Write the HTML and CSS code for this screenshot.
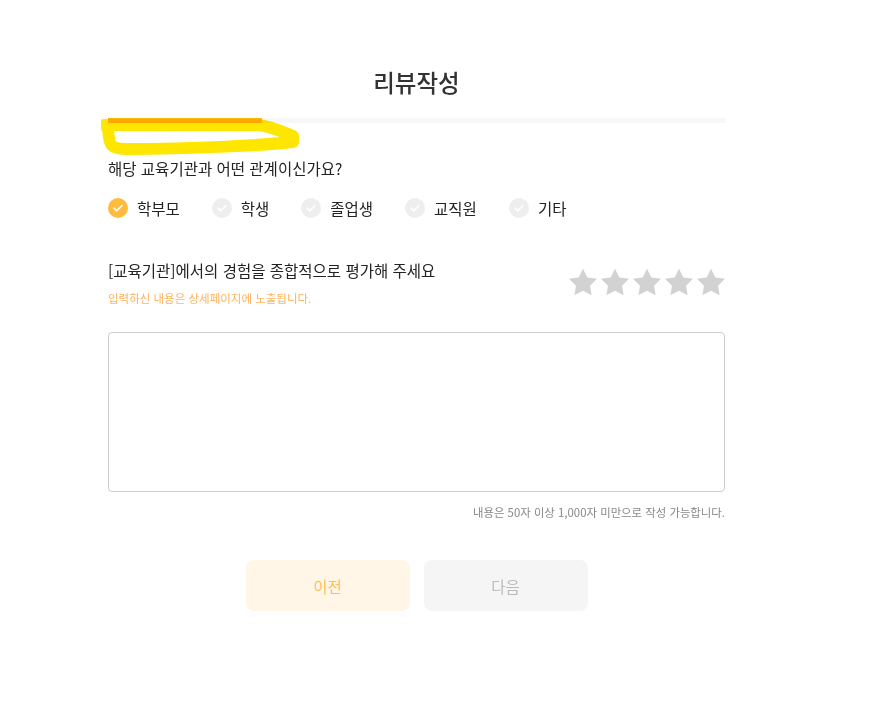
FILE: index.html
```html
<!DOCTYPE html>
<html lang="ko">
<head>
<meta charset="utf-8">
<title>리뷰작성</title>
<link rel="stylesheet" href="styles.css">
</head>
<body>
<div class="page">
  <h1 class="title">리뷰작성</h1>
  <div class="progress"><div class="progress-fill" style="width:25%"></div></div>
  <p class="question">해당 교육기관과 어떤 관계이신가요?</p>
  <div class="options">
    <label class="option active"><span class="check"><svg viewBox="0 0 20 20"><path d="M6 10.2l2.7 2.6L14 7.6"/></svg></span>학부모</label>
    <label class="option"><span class="check"><svg viewBox="0 0 20 20"><path d="M6 10.2l2.7 2.6L14 7.6"/></svg></span>학생</label>
    <label class="option"><span class="check"><svg viewBox="0 0 20 20"><path d="M6 10.2l2.7 2.6L14 7.6"/></svg></span>졸업생</label>
    <label class="option"><span class="check"><svg viewBox="0 0 20 20"><path d="M6 10.2l2.7 2.6L14 7.6"/></svg></span>교직원</label>
    <label class="option"><span class="check"><svg viewBox="0 0 20 20"><path d="M6 10.2l2.7 2.6L14 7.6"/></svg></span>기타</label>
  </div>
  <div class="rating-row">
    <div class="rating-text">
      <p class="rating-label">[교육기관]에서의 경험을 종합적으로 평가해 주세요</p>
      <p class="note">입력하신 내용은 상세페이지에 노출됩니다.</p>
    </div>
    <div class="stars">
      <svg viewBox="2 2 20 19.02"><polygon points="12,2 15.09,8.26 22,9.27 17,14.14 18.18,21.02 12,17.77 5.82,21.02 7,14.14 2,9.27 8.91,8.26"/></svg>
      <svg viewBox="2 2 20 19.02"><polygon points="12,2 15.09,8.26 22,9.27 17,14.14 18.18,21.02 12,17.77 5.82,21.02 7,14.14 2,9.27 8.91,8.26"/></svg>
      <svg viewBox="2 2 20 19.02"><polygon points="12,2 15.09,8.26 22,9.27 17,14.14 18.18,21.02 12,17.77 5.82,21.02 7,14.14 2,9.27 8.91,8.26"/></svg>
      <svg viewBox="2 2 20 19.02"><polygon points="12,2 15.09,8.26 22,9.27 17,14.14 18.18,21.02 12,17.77 5.82,21.02 7,14.14 2,9.27 8.91,8.26"/></svg>
      <svg viewBox="2 2 20 19.02"><polygon points="12,2 15.09,8.26 22,9.27 17,14.14 18.18,21.02 12,17.77 5.82,21.02 7,14.14 2,9.27 8.91,8.26"/></svg>
    </div>
  </div>
  <textarea class="content"></textarea>
  <p class="helper">내용은 50자 이상 1,000자 미만으로 작성 가능합니다.</p>
  <div class="buttons">
    <button class="btn prev">이전</button>
    <button class="btn next">다음</button>
  </div>
  <svg class="scribble" viewBox="0 0 210 45" width="210" height="45">
    <path d="M3,10 L157,10 C170,11 184,18 192,21 L192,27 C165,30 95,34 25,34 C9,34 8,30 7,13"/>
  </svg>
</div>
</body>
</html>
```

FILE: styles.css
```css
* { box-sizing: border-box; }
body {
  margin: 0;
  background: #fff;
  font-family: "Noto Sans CJK KR", "Noto Sans", sans-serif;
  color: #333;
}
.page {
  position: relative;
  width: 617px;
  margin-left: 108px;
  padding-top: 66px;
}
.title {
  margin: 0;
  height: 32px;
  line-height: 32px;
  font-size: 23.5px;
  font-weight: 500;
  text-align: center;
  color: #333;
}
.progress {
  margin-top: 20px;
  height: 5px;
  background: #f7f7f7;
}
.progress-fill {
  height: 100%;
  background: #ffb800;
}
.question {
  margin: 33px 0 0;
  font-size: 15.5px;
  line-height: 24px;
  color: #222;
}
.options {
  margin-top: 18px;
  display: flex;
  gap: 32px;
}
.option {
  display: flex;
  align-items: center;
  gap: 9px;
  height: 20px;
  font-size: 15.5px;
  color: #222;
}
.check {
  width: 20px;
  height: 20px;
  border-radius: 50%;
  background: #eeeeee;
  display: flex;
}
.check svg {
  width: 20px;
  height: 20px;
  fill: none;
  stroke: #fff;
  stroke-width: 1.6;
  stroke-linecap: round;
  stroke-linejoin: round;
}
.option.active .check { background: #ffbb3d; }
.rating-row {
  margin-top: 40px;
  display: flex;
  justify-content: space-between;
  align-items: flex-start;
}
.rating-label {
  margin: 0;
  font-size: 15.5px;
  line-height: 24px;
  color: #222;
}
.note {
  margin: 7px 0 0;
  font-size: 11.5px;
  line-height: 18px;
  color: #ffb35c;
}
.stars {
  margin-top: 10px;
  display: flex;
  gap: 4px;
}
.stars svg {
  width: 28px;
  height: 28px;
  fill: #d2d2d2;
}
.content {
  display: block;
  margin-top: 25px;
  width: 617px;
  height: 160px;
  border: 1px solid #cccccc;
  border-radius: 4px;
  resize: none;
}
.helper {
  margin: 11px 0 0;
  font-size: 11.4px;
  line-height: 18px;
  text-align: right;
  color: #888;
}
.buttons {
  margin-top: 39px;
  display: flex;
  justify-content: center;
  gap: 14px;
}
.btn {
  width: 164px;
  height: 51px;
  border: none;
  border-radius: 8px;
  font-family: inherit;
  font-size: 15.5px;
}
.prev { background: #fff6e7; color: #ffbe55; }
.next { background: #f5f5f5; color: #bbbbbb; }
.scribble {
  position: absolute;
  left: -7px;
  top: 115px;
  mix-blend-mode: multiply;
}
.scribble path {
  fill: none;
  stroke: #ffe600;
  stroke-width: 12;
  stroke-linecap: round;
  stroke-linejoin: round;
}
```
